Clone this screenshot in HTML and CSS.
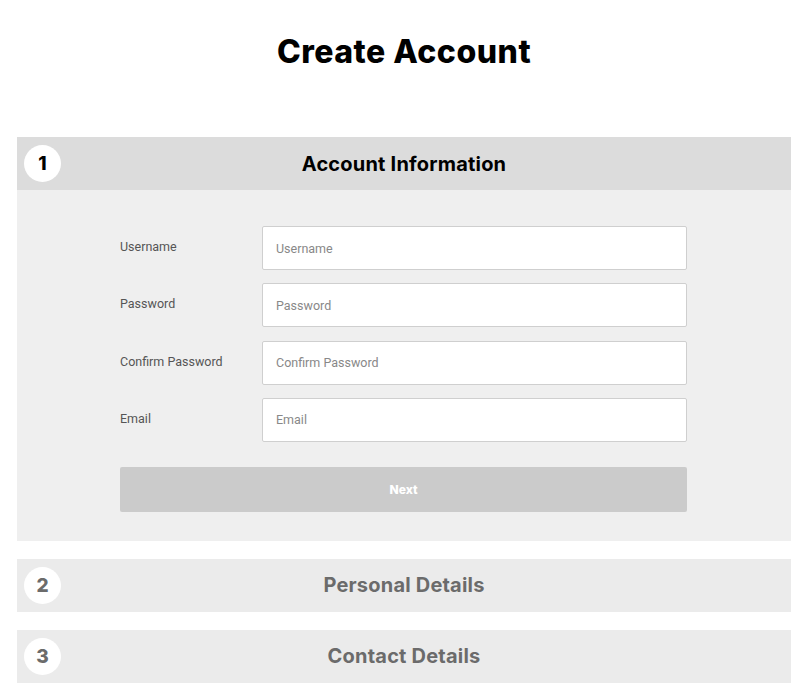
FILE: index.html
```html
<!DOCTYPE html>
<html>
<head>
<meta charset="utf-8">
<link rel="stylesheet" href="styles.css">
</head>
<body>
<div class="page">
  <h1 class="title">Create Account</h1>
  <section class="step active">
    <div class="step-head">
      <span class="num">1</span>
      <span class="step-title">Account Information</span>
    </div>
    <div class="step-body">
      <form class="form">
        <div class="row"><label class="lbl">Username</label><input class="inp" placeholder="Username"></div>
        <div class="row"><label class="lbl">Password</label><input class="inp" type="password" placeholder="Password"></div>
        <div class="row"><label class="lbl">Confirm Password</label><input class="inp" type="password" placeholder="Confirm Password"></div>
        <div class="row"><label class="lbl">Email</label><input class="inp" placeholder="Email"></div>
        <button type="button" class="next">Next</button>
      </form>
    </div>
  </section>
  <section class="step">
    <div class="step-head">
      <span class="num">2</span>
      <span class="step-title">Personal Details</span>
    </div>
  </section>
  <section class="step">
    <div class="step-head">
      <span class="num">3</span>
      <span class="step-title">Contact Details</span>
    </div>
  </section>
</div>
</body>
</html>
```

FILE: styles.css
```css
* { box-sizing: border-box; }
html, body { margin: 0; padding: 0; background: #fff; }
body { font-family: Roboto, "Liberation Sans", sans-serif; }
.page { margin: 0 9px 0 17px; padding-top: 32px; }
.title {
  margin: 0 0 65px;
  text-align: center;
  font-family: Inter, "Liberation Sans", sans-serif;
  font-weight: 800;
  font-size: 32px;
  line-height: 40px;
  color: #000;
  letter-spacing: 0.5px;
}
.step { margin-bottom: 18px; }
.step-head {
  position: relative;
  height: 53px;
  background: #ebebeb;
  display: flex;
  align-items: center;
  justify-content: center;
}
.step.active .step-head { background: #dcdcdc; }
.num {
  position: absolute;
  left: 7px;
  top: 8px;
  width: 37px;
  height: 37px;
  border-radius: 50%;
  background: #fff;
  display: flex;
  align-items: center;
  justify-content: center;
  font-family: Inter, "Liberation Sans", sans-serif;
  font-weight: 800;
  font-size: 19px;
  color: #6b6b6b;
}
.step.active .num { color: #000; }
.step-title {
  font-family: Inter, "Liberation Sans", sans-serif;
  font-weight: 700;
  font-size: 20px;
  color: #6b6b6b;
  letter-spacing: 0.2px;
}
.step.active .step-title { color: #000; }
.step-body {
  background: #efefef;
  padding: 36px 104px 29px 103px;
}
.form { display: flex; flex-direction: column; }
.row { display: flex; align-items: flex-start; margin-bottom: 13.3px; }
.row:nth-of-type(4) { margin-bottom: 25px; }
.lbl {
  width: 142px;
  flex: none;
  padding-top: 13px;
  font-size: 12.5px;
  color: #555;
}
.inp {
  flex: 1;
  height: 44px;
  border: 1px solid #cfcfcf;
  border-radius: 2px;
  background: #fff;
  padding: 0 13px;
  font-family: Roboto, "Liberation Sans", sans-serif;
  font-size: 12.5px;
  color: #333;
  outline: none;
}
.inp::placeholder { color: #888; }
.next {
  height: 45px;
  border: 0;
  border-radius: 2px;
  background: #cbcbcb;
  color: #fff;
  font-family: Inter, "Liberation Sans", sans-serif;
  font-weight: 800;
  font-size: 12px;
}
```
